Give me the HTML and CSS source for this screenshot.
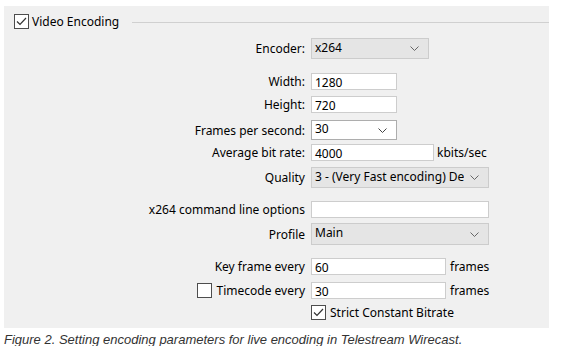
FILE: index.html
```html
<!DOCTYPE html>
<html>
<head>
<meta charset="utf-8">
<link rel="stylesheet" href="styles.css">
</head>
<body>
<div class="panel">
  <div class="group-head">
    <span class="cb"><svg viewBox="0 0 15 15" width="15" height="15"><path d="M3 7.5 L6 10.5 L12 4" fill="none" stroke="#333" stroke-width="1.2"/></svg></span>
    <span class="gtitle">Video Encoding</span>
    <span class="rule"></span>
  </div>
  <div class="form">
    <div class="row r-enc">
      <span class="lbl">Encoder:</span>
      <div class="select gray w-enc"><span class="val">x264</span><svg class="chev" viewBox="0 0 9 5" width="9" height="5"><path d="M0.5 0.5 L4.5 4.5 L8.5 0.5" fill="none" stroke="#666" stroke-width="1"/></svg></div>
    </div>
    <div class="row r-width">
      <span class="lbl">Width:</span>
      <div class="input w-small"><span class="val">1280</span></div>
    </div>
    <div class="row r-height">
      <span class="lbl">Height:</span>
      <div class="input w-small"><span class="val">720</span></div>
    </div>
    <div class="row r-fps">
      <span class="lbl">Frames per second:</span>
      <div class="select white w-small h-fps"><span class="val">30</span><svg class="chev" viewBox="0 0 9 5" width="9" height="5"><path d="M0.5 0.5 L4.5 4.5 L8.5 0.5" fill="none" stroke="#444" stroke-width="1"/></svg></div>
    </div>
    <div class="row r-bit">
      <span class="lbl">Average bit rate:</span>
      <div class="input w-bit"><span class="val">4000</span></div>
      <span class="unit">kbits/sec</span>
    </div>
    <div class="row r-qual">
      <span class="lbl">Quality</span>
      <div class="select gray w-wide"><span class="val clip">3 - (Very Fast encoding) Default</span><svg class="chev" viewBox="0 0 9 5" width="9" height="5"><path d="M0.5 0.5 L4.5 4.5 L8.5 0.5" fill="none" stroke="#666" stroke-width="1"/></svg></div>
    </div>
    <div class="row r-opts">
      <span class="lbl">x264 command line options</span>
      <div class="input w-wide"></div>
    </div>
    <div class="row r-prof">
      <span class="lbl">Profile</span>
      <div class="select gray w-wide h-prof"><span class="val">Main</span><svg class="chev" viewBox="0 0 9 5" width="9" height="5"><path d="M0.5 0.5 L4.5 4.5 L8.5 0.5" fill="none" stroke="#666" stroke-width="1"/></svg></div>
    </div>
    <div class="row r-key">
      <span class="lbl">Key frame every</span>
      <div class="input w-frames"><span class="val">60</span></div>
      <span class="unit u-frames">frames</span>
    </div>
    <div class="row r-time">
      <span class="lbl"><span class="cb cb-empty"></span><span>Timecode every</span></span>
      <div class="input w-frames"><span class="val">30</span></div>
      <span class="unit u-frames">frames</span>
    </div>
    <div class="row r-strict">
      <span class="lbl"></span>
      <div class="check-line">
        <span class="cb"><svg viewBox="0 0 15 15" width="15" height="15"><path d="M3 7.5 L6 10.5 L12 4" fill="none" stroke="#333" stroke-width="1.2"/></svg></span>
        <span>Strict Constant Bitrate</span>
      </div>
    </div>
  </div>
</div>
<p class="caption">Figure 2. Setting encoding parameters for live encoding in Telestream Wirecast.</p>
</body>
</html>
```

FILE: styles.css
```css
* { box-sizing: border-box; }
html, body { margin: 0; padding: 0; background: #fff; }
body {
  width: 561px;
  height: 346px;
  overflow: hidden;
  font-family: "Noto Sans", "Open Sans", sans-serif;
  font-size: 12px;
  color: #000;
}
.panel {
  margin: 6px 0 0 4px;
  width: 545px;
  height: 322px;
  background: #f0f0f0;
  position: relative;
}
.group-head {
  display: flex;
  align-items: center;
  padding: 7px 0 0 10px;
  height: 23px;
}
.cb {
  display: inline-block;
  width: 15px;
  height: 15px;
  border: 1px solid #4d4d4d;
  background: #fff;
  position: relative;
  flex: none;
}
.cb svg { position: absolute; left: -1px; top: -1px; }
.gtitle { margin-left: 3px; line-height: 15px; }
.rule {
  flex: 1;
  height: 1px;
  background: #d0d0d0;
  margin-left: 13px;
  margin-top: 2px;
}
.form {
  display: flex;
  flex-direction: column;
}
.row {
  display: flex;
  align-items: center;
}
.lbl {
  width: 301px;
  margin-right: 6px;
  text-align: right;
  display: flex;
  justify-content: flex-end;
  align-items: center;
  gap: 4px;
  white-space: nowrap;
}
.r-enc { margin-top: 9px; }
.r-width { margin-top: 14px; }
.r-height { margin-top: 6px; }
.r-fps { margin-top: 7px; }
.r-bit { margin-top: 4px; }
.r-qual { margin-top: 6px; }
.r-opts { margin-top: 13px; }
.r-prof { margin-top: 5px; }
.r-key { margin-top: 13px; }
.r-time { margin-top: 7px; }
.r-strict { margin-top: 6px; }

.select {
  height: 21px;
  display: flex;
  align-items: center;
  justify-content: space-between;
  padding: 0 9px 0 3px;
  border: 1px solid #cccccc;
}
.select.gray { background: #e5e5e5; }
.select.white { background: #fff; border-color: #adadad; }
.h-fps { height: 20px; }
.h-prof { height: 22px; }
.select .val { line-height: 16px; margin-top: -2px; }
.select .clip {
  flex: 1;
  overflow: hidden;
  white-space: nowrap;
  margin-right: 6px;
}
.chev { flex: none; }
.input {
  height: 17px;
  background: #fff;
  border: 1px solid #cdcdcd;
  padding: 1px 3px 0;
  display: flex;
  align-items: center;
}
.input .val { line-height: 15px; }
.w-enc { width: 118px; }
.w-small { width: 86px; }
.w-bit { width: 123px; }
.w-wide { width: 178px; }
.w-frames { width: 135px; }
.unit { margin-left: 3px; }
.u-frames { margin-left: 4px; }
.check-line {
  display: flex;
  align-items: center;
  gap: 4px;
  height: 15px;
}
.caption {
  margin: 4px 0 0 4px;
  font-family: "Liberation Sans", Arial, sans-serif;
  font-style: italic;
  font-size: 13px;
  color: #333;
  line-height: 15px;
}
```
